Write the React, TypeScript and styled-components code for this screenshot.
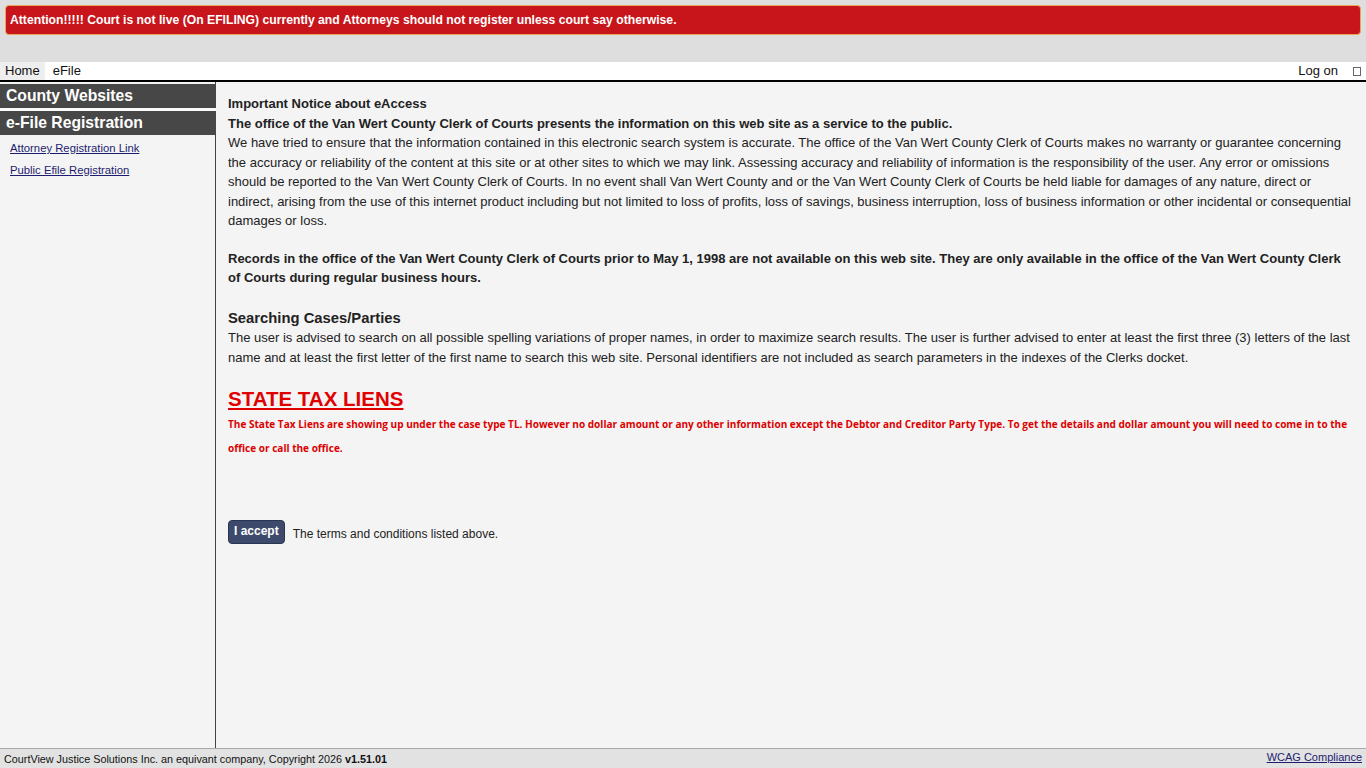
import React from "react";
import styled, { createGlobalStyle } from "styled-components";

const GlobalStyle = createGlobalStyle`
  html, body {
    margin: 0;
    padding: 0;
    height: 100%;
  }
  body {
    font-family: "Liberation Sans", Arial, sans-serif;
    color: #222;
    background: #f4f4f4;
  }
  #root {
    height: 100%;
  }
`;

const Page = styled.div`
  display: flex;
  flex-direction: column;
  height: 100vh;
  overflow: hidden;
`;

const TopBand = styled.div`
  background: #dedede;
  padding: 5px 5px 27px 5px;
`;

const Alert = styled.div`
  background: #c8151b;
  border: 1px solid #e7a65a;
  border-radius: 4px;
  color: #fff;
  font-size: 12.2px;
  font-weight: bold;
  display: flex;
  align-items: center;
  padding: 0 4px 1px 4px;
  box-sizing: border-box;
  height: 30px;
`;

const NavBar = styled.div`
  display: flex;
  align-items: stretch;
  height: 18px;
  background: #fff;
  border-bottom: 2px solid #000;
  font-size: 13px;
`;

const NavItem = styled.span<{ $active?: boolean }>`
  display: flex;
  align-items: center;
  padding: 0 5px 1px 5px;
  background: ${(p) => (p.$active ? "#eeeeee" : "#fff")};
  color: #111;
  margin-right: ${(p) => (p.$active ? "3px" : "0")};
`;

const NavSpacer = styled.div`
  flex: 1;
`;

const LogOn = styled.span`
  display: flex;
  align-items: center;
  padding: 0 15px 1px 0;
  color: #111;
`;

const IconBox = styled.span`
  align-self: center;
  width: 6px;
  height: 7px;
  border: 1px solid #666;
  margin-right: 5px;
`;

const Body = styled.div`
  flex: 1;
  display: flex;
  min-height: 0;
`;

const Sidebar = styled.aside`
  width: 215px;
  border-right: 1px solid #444;
  padding-top: 2px;
  flex-shrink: 0;
`;

const SideHeader = styled.div`
  background: #474747;
  color: #fff;
  font-size: 15.7px;
  font-weight: bold;
  height: 24px;
  line-height: 24px;
  padding-left: 6px;
  margin-right: -1px;
  & + & {
    border-top: 3px solid #fafafa;
  }
`;

const SideLinks = styled.div`
  display: flex;
  flex-direction: column;
  gap: 8px;
  padding: 6px 10px;
`;

const SideLink = styled.a`
  font-size: 11.3px;
  color: #1d1d6f;
  text-decoration: underline;
  line-height: 14px;
`;

const Main = styled.main`
  flex: 1;
  padding: 12px 12px 0 12px;
  font-size: 13px;
  line-height: 19.5px;
  color: #222;
`;

const Heading = styled.div`
  font-weight: bold;
  font-size: 13px;
`;

const SubHeading = styled.div`
  font-weight: bold;
  font-size: 14.8px;
  padding-top: 3px;
`;

const Paragraph = styled.p<{ $bold?: boolean }>`
  margin: 0 0 18px 0;
  font-weight: ${(p) => (p.$bold ? "bold" : "normal")};
`;

const LienTitle = styled.div`
  color: #e00000;
  font-size: 20.5px;
  font-weight: bold;
  text-decoration: underline;
  line-height: 24px;
  padding-top: 2px;
`;

const LienText = styled.p`
  margin: 1px 0 0 0;
  color: #dd0000;
  font-family: "Open Sans", "DejaVu Sans", Verdana, sans-serif;
  font-size: 10.05px;
  font-weight: bold;
  line-height: 24px;
`;

const AcceptRow = styled.div`
  display: flex;
  align-items: center;
  gap: 8px;
  margin-top: 60px;
`;

const AcceptButton = styled.button`
  background: #3e4a6c;
  border: 1px solid #2b3552;
  border-radius: 4px;
  color: #fff;
  font-family: "Liberation Sans", Arial, sans-serif;
  font-size: 12px;
  font-weight: bold;
  height: 24px;
  padding: 0 5px 2px 5px;
  cursor: pointer;
`;

const AcceptText = styled.span`
  font-size: 12px;
  color: #222;
  padding-top: 5px;
`;

const Footer = styled.footer`
  display: flex;
  justify-content: space-between;
  align-items: center;
  height: 19px;
  background: #e2e2e2;
  border-top: 1px solid #a8a8a8;
  font-size: 10.8px;
  padding: 0 4px;
  color: #111;
`;

const FooterLink = styled.a`
  color: #1d1d6f;
  text-decoration: underline;
  font-size: 11px;
  margin-bottom: 3px;
`;

const App: React.FC = () => {
  return (
    <Page>
      <GlobalStyle />
      <TopBand>
        <Alert>
          Attention!!!!! Court is not live (On EFILING) currently and Attorneys should not
          register unless court say otherwise.
        </Alert>
      </TopBand>
      <NavBar>
        <NavItem $active>Home</NavItem>
        <NavItem>eFile</NavItem>
        <NavSpacer />
        <LogOn>Log on</LogOn>
        <IconBox />
      </NavBar>
      <Body>
        <Sidebar>
          <SideHeader>County Websites</SideHeader>
          <SideHeader>e-File Registration</SideHeader>
          <SideLinks>
            <SideLink href="#">Attorney Registration Link</SideLink>
            <SideLink href="#">Public Efile Registration</SideLink>
          </SideLinks>
        </Sidebar>
        <Main>
          <Heading>Important Notice about eAccess</Heading>
          <Heading>
            The office of the Van Wert County Clerk of Courts presents the information on this
            web site as a service to the public.
          </Heading>
          <Paragraph>
            We have tried to ensure that the information contained in this electronic search
            system is accurate. The office of the Van Wert County Clerk of Courts makes no
            warranty or guarantee concerning the accuracy or reliability of the content at this
            site or at other sites to which we may link. Assessing accuracy and reliability of
            information is the responsibility of the user. Any error or omissions should be
            reported to the Van Wert County Clerk of Courts. In no event shall Van Wert County
            and or the Van Wert County Clerk of Courts be held liable for damages of any nature,
            direct or indirect, arising from the use of this internet product including but not
            limited to loss of profits, loss of savings, business interruption, loss of business
            information or other incidental or consequential damages or loss.
          </Paragraph>
          <Paragraph $bold>
            Records in the office of the Van Wert County Clerk of Courts prior to May 1, 1998 are
            not available on this web site. They are only available in the office of the Van Wert
            County Clerk of Courts during regular business hours.
          </Paragraph>
          <SubHeading>Searching Cases/Parties</SubHeading>
          <Paragraph>
            The user is advised to search on all possible spelling variations of proper names, in
            order to maximize search results. The user is further advised to enter at least the
            first three (3) letters of the last name and at least the first letter of the first
            name to search this web site. Personal identifiers are not included as search
            parameters in the indexes of the Clerks docket.
          </Paragraph>
          <LienTitle>STATE TAX LIENS</LienTitle>
          <LienText>
            The State Tax Liens are showing up under the case type TL. However no dollar amount or
            any other information except the Debtor and Creditor Party Type. To get the details
            and dollar amount you will need to come in to the office or call the office.
          </LienText>
          <AcceptRow>
            <AcceptButton>I accept</AcceptButton>
            <AcceptText>The terms and conditions listed above.</AcceptText>
          </AcceptRow>
        </Main>
      </Body>
      <Footer>
        <span>
          CourtView Justice Solutions Inc. an equivant company, Copyright 2026 <b>v1.51.01</b>
        </span>
        <FooterLink href="#">WCAG Compliance</FooterLink>
      </Footer>
    </Page>
  );
};

export default App;
